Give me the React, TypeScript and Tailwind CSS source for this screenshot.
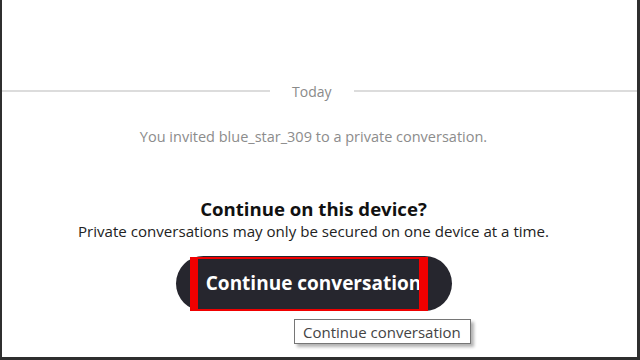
import { useState } from 'react'

export default function App() {
  const [hover] = useState(true)

  return (
    <div className="relative w-[640px] h-[360px] overflow-hidden bg-white border-l-2 border-r-[3px] border-b-[3px] border-[#2f2f2f] font-['Open_Sans',sans-serif]">
      {/* Date divider */}
      <div className="mt-[82px] h-[18px] flex items-center gap-[22px]">
        <div className="w-[268px] h-[2px] bg-[#dcdcdc]" />
        <span className="text-[14px] leading-[18px] text-[#8a8a8a] translate-y-[1px]">Today</span>
        <div className="flex-1 h-[2px] bg-[#dcdcdc]" />
      </div>

      <div className="flex flex-col items-center pr-[12px]">
        <p className="mt-[27px] h-[20px] leading-[20px] text-[14.5px] text-[#8c8c8c] whitespace-nowrap">
          You invited blue_star_309 to a private conversation.
        </p>

        <h2 className="mt-[50px] h-[24px] leading-[24px] text-[18.6px] font-bold text-[#111] whitespace-nowrap">
          Continue on this device?
        </h2>
        <p className="h-[20px] leading-[20px] text-[15.1px] text-[#222] whitespace-nowrap">
          Private conversations may only be secured on one device at a time.
        </p>

        <button className="relative mt-[15px] w-[276px] h-[55px] rounded-full bg-[#26262e] flex items-center justify-center">
          <span className="text-[19px] font-bold text-white">Continue conversation</span>
          {/* highlight box */}
          <span className="absolute left-[14px] top-[1px] w-[238px] h-[54px] border-l-[8px] border-r-[9px] border-y-2 border-[#f00000]" />
        </button>
      </div>

      {hover && (
        <div className="absolute left-[292px] top-[319px] w-[177px] h-[25px] bg-white border border-[#767676] shadow-[3px_3px_3px_rgba(0,0,0,0.3)] flex items-center pl-[8px]">
          <span className="text-[15px] leading-[18px] text-[#444] whitespace-nowrap">Continue conversation</span>
        </div>
      )}
    </div>
  )
}
